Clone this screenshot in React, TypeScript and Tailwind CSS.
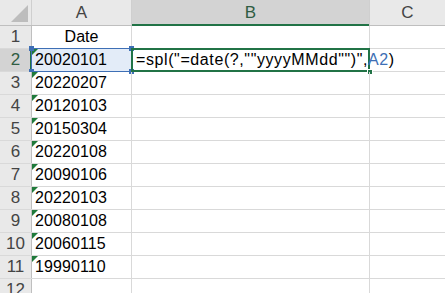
import React from "react";

const dates = [
  "20020101",
  "20220207",
  "20120103",
  "20150304",
  "20220108",
  "20090106",
  "20220103",
  "20080108",
  "20060115",
  "19990110",
];

const font = { fontFamily: '"Liberation Sans", Arial, sans-serif' };

function TextFlag() {
  return (
    <span className="absolute left-0 top-0 w-0 h-0 border-t-[6px] border-r-[6px] border-t-[#1f7a3a] border-r-transparent" />
  );
}

function Handle({ className }: { className: string }) {
  return <span className={`absolute w-[5px] h-[5px] bg-[#3e6fb5] ${className}`} />;
}

export default function App() {
  return (
    <div className="w-[445px] h-[293px] overflow-hidden bg-white text-[16px] text-black" style={font}>
      {/* column headers */}
      <div className="flex h-[26px] bg-[#e9e9e9] border-b border-[#bfbfbf] text-[#444] text-[17px]">
        <div className="relative w-[32px] border-r border-[#cfcfcf]">
          <span className="absolute right-[3px] bottom-[3px] w-0 h-0 border-b-[17px] border-l-[17px] border-b-[#bdbdbd] border-l-transparent" />
        </div>
        <div className="w-[100px] border-r border-[#cfcfcf] flex items-center justify-center">A</div>
        <div className="relative w-[238px] border-r border-[#cfcfcf] bg-[#d3d3d3] text-[#2f5d43] flex items-center justify-center">
          B
          <span className="absolute left-0 right-0 -bottom-[1px] h-[2px] bg-[#217346]" />
        </div>
        <div className="flex-1 flex items-center justify-center">C</div>
      </div>

      {/* row 1 */}
      <div className="flex h-[23px] border-b border-[#d9d9d9]">
        <div className="w-[32px] bg-[#e9e9e9] border-r border-[#bfbfbf] text-[#444] text-[17px] flex items-center justify-center">1</div>
        <div className="w-[100px] border-r border-[#d9d9d9] flex items-center justify-center">Date</div>
        <div className="w-[238px] border-r border-[#d9d9d9]" />
        <div className="flex-1" />
      </div>

      {/* data rows */}
      {dates.map((d, i) => {
        const row = i + 2;
        const active = row === 2;
        return (
          <div key={d + row} className="flex h-[23px] border-b border-[#d9d9d9]">
            <div
              className={`relative w-[32px] border-r border-[#bfbfbf] text-[17px] flex items-center justify-center ${
                active ? "bg-[#d3d3d3] text-[#2f5d43]" : "bg-[#e9e9e9] text-[#444]"
              }`}
            >
              {row}
              {active && <span className="absolute top-0 bottom-0 -right-[1px] w-[2px] bg-[#217346]" />}
            </div>
            <div
              className={`relative w-[100px] border-r border-[#d9d9d9] flex items-center pl-[3px] tracking-[0.1px] ${
                active ? "bg-[#e3ecf8]" : ""
              }`}
            >
              <TextFlag />
              {d}
              {active && (
                <>
                  <span className="absolute -left-[1px] -top-[1px] -right-[1px] -bottom-[1px] border border-[#3e6fb5]" />
                  <Handle className="-left-[3px] -top-[3px]" />
                  <Handle className="-right-[3px] -top-[3px]" />
                  <Handle className="-left-[3px] -bottom-[3px]" />
                  <Handle className="-right-[3px] -bottom-[3px]" />
                </>
              )}
            </div>
            <div className="relative w-[238px] border-r border-[#d9d9d9] flex items-center pl-[4px] whitespace-nowrap">
              {active && (
                <>
                  <span className="relative z-10 tracking-[0.6px]">
                    =spl("=date(?,""yyyyMMdd"")",<span className="text-[#3e6fb5]">A2</span>)
                  </span>
                  <span className="absolute -left-[1px] -top-[1px] -right-[1px] -bottom-[1px] border-2 border-[#217346]" />
                  <span className="absolute -right-[4px] -bottom-[4px] w-[6px] h-[6px] bg-[#217346] border border-white" />
                </>
              )}
            </div>
            <div className="flex-1" />
          </div>
        );
      })}

      {/* row 12 */}
      <div className="flex h-[23px] border-b border-[#d9d9d9]">
        <div className="w-[32px] bg-[#e9e9e9] border-r border-[#bfbfbf] text-[#444] text-[17px] flex items-center justify-center">12</div>
        <div className="w-[100px] border-r border-[#d9d9d9]" />
        <div className="w-[238px] border-r border-[#d9d9d9]" />
        <div className="flex-1" />
      </div>
    </div>
  );
}
